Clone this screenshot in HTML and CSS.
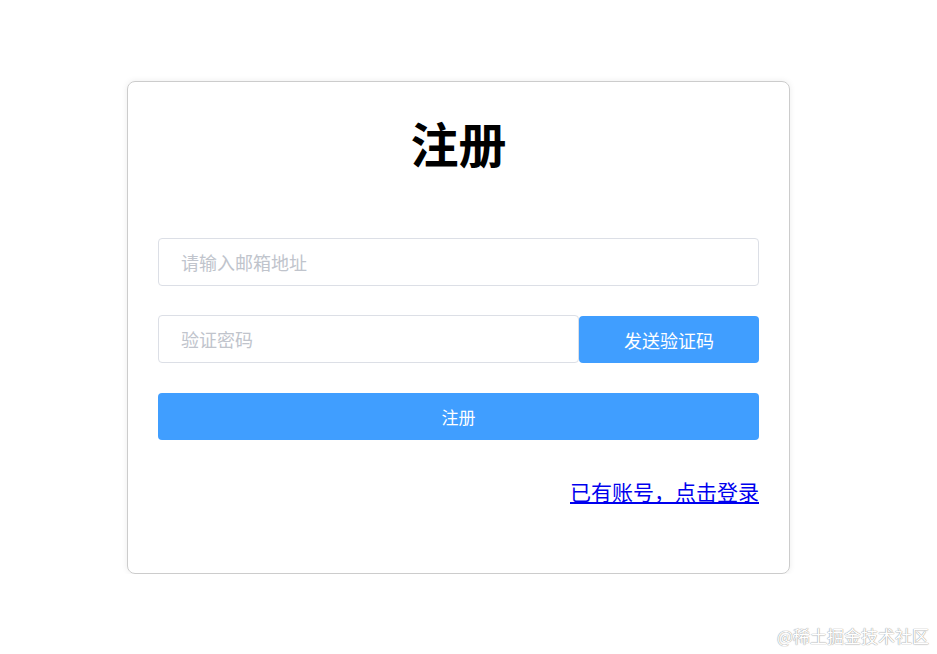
FILE: index.html
```html
<!DOCTYPE html>
<html lang="zh-CN">
<head>
<meta charset="UTF-8">
<meta name="viewport" content="width=device-width, initial-scale=1.0">
<title>注册</title>
<link rel="stylesheet" href="styles.css">
</head>
<body>
<div class="register-box">
<h1 class="title">注册</h1>
<input type="text" class="field" placeholder="请输入邮箱地址">
<div class="code-row">
<input type="text" class="field code-field" placeholder="验证密码">
<button class="btn send-btn">发送验证码</button>
</div>
<button class="btn submit-btn">注册</button>
<div class="login-link">
<a href="#">已有账号，点击登录</a>
</div>
</div>
<div class="watermark">@稀土掘金技术社区</div>
</body>
</html>
```
FILE: styles.css
```css
* {
box-sizing: border-box;
}

body {
margin: 0;
font-family: "Microsoft YaHei", "Noto Sans CJK SC", sans-serif;
background-color: #fff;
}

.register-box {
width: 663px;
margin: 81px 0 0 127px;
padding: 31px 30px 67px;
border: 1px solid #ccc;
border-radius: 8px;
box-shadow: 0 0 6px rgba(0, 0, 0, 0.08);
display: flex;
flex-direction: column;
}

.title {
margin: 0 0 67px;
font-size: 48px;
line-height: 58px;
text-align: center;
color: #000;
}

.field {
display: block;
width: 100%;
height: 48px;
padding: 0 22px;
border: 1px solid #dcdfe6;
border-radius: 4px;
font-family: inherit;
font-size: 18px;
color: #606266;
outline: none;
}

.field::placeholder {
color: #c0c4cc;
}

.code-row {
display: flex;
margin-top: 29px;
}

.code-field {
width: 421px;
flex: none;
}

.btn {
border: none;
border-radius: 4px;
background-color: #409eff;
color: #fff;
font-family: inherit;
font-size: 18px;
cursor: pointer;
}

.send-btn {
width: 180px;
height: 47px;
margin-top: 1px;
}

.submit-btn {
height: 47px;
margin-top: 30px;
font-size: 17px;
}

.login-link {
margin-top: 36px;
text-align: right;
font-size: 21px;
line-height: 30px;
}

.login-link a {
color: #0000ee;
}

.watermark {
position: absolute;
right: 8px;
bottom: 6px;
font-size: 17px;
color: #fff;
text-shadow: 0 0 1px #999, 0 0 1px #999;
}
```
